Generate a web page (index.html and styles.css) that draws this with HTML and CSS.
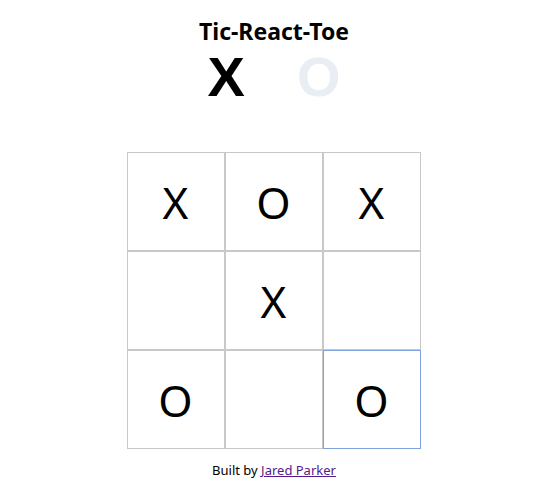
FILE: index.html
```html
<!DOCTYPE html>
<html>
<head>
<meta charset="utf-8">
<link rel="stylesheet" href="styles.css">
</head>
<body>
<div class="app">
  <h1 class="title">Tic-React-Toe</h1>
  <div class="players">
    <span class="player active">X</span>
    <span class="player inactive">O</span>
  </div>
  <div class="board">
    <button class="cell">X</button>
    <button class="cell">O</button>
    <button class="cell">X</button>
    <button class="cell"></button>
    <button class="cell">X</button>
    <button class="cell"></button>
    <button class="cell">O</button>
    <button class="cell"></button>
    <button class="cell focused">O</button>
  </div>
  <footer class="footer">Built by <a href="#" class="link">Jared Parker</a></footer>
</div>
</body>
</html>
```
FILE: styles.css
```css
html, body {
  margin: 0;
  padding: 0;
  background: #fff;
}
.app {
  display: flex;
  flex-direction: column;
  align-items: center;
  font-family: "Noto Sans", "Open Sans", sans-serif;
  color: #000;
}
.title {
  margin: 16px 0 0;
  font-size: 23px;
  font-weight: 700;
  line-height: 30px;
}
.players {
  display: flex;
  gap: 52px;
  height: 48px;
  align-items: center;
  margin-top: 7px;
}
.player {
  font-size: 56px;
  font-weight: 700;
  line-height: 48px;
  font-family: "Liberation Sans", Arial, sans-serif;
}
.inactive {
  color: #e9edf4;
}
.board {
  display: grid;
  grid-template-columns: repeat(3, 98px);
  grid-template-rows: repeat(3, 99px);
  margin-top: 51px;
  margin-left: -1px;
}
.cell {
  box-sizing: border-box;
  width: 98px;
  height: 99px;
  border: 1px solid #c8c8c8;
  background: #fff;
  font-family: "Noto Sans", sans-serif;
  font-size: 44px;
  font-weight: 400;
  color: #000;
  padding: 0;
  margin: 0;
}
.cell.focused {
  border: 1px solid #7fa3e0;
}
.footer {
  margin-top: 12px;
  font-size: 13px;
}
.link {
  color: #551a8b;
}
```
